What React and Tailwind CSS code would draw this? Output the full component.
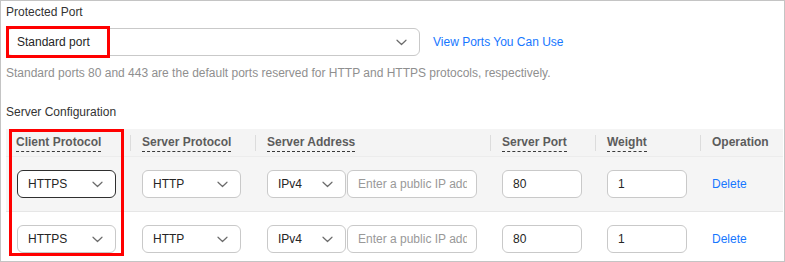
import React from "react";

function Chevron() {
  return (
    <svg width="11" height="7" viewBox="0 0 11 7" fill="none" className="shrink-0">
      <path d="M1 1.2l4.5 4.3 4.5-4.3" stroke="#6b6b6b" strokeWidth="1.2" strokeLinecap="round" strokeLinejoin="round" />
    </svg>
  );
}

function Select({ value, width, dark }) {
  return (
    <div
      className={`h-[28px] ${width} shrink-0 rounded-[6px] border ${dark ? "border-[#2f2f2f]" : "border-[#c9c9c9]"} bg-white flex items-center justify-between pl-[10px] pr-[12px] text-[12px] text-[#252525]`}
    >
      <span>{value}</span>
      <Chevron />
    </div>
  );
}

function Input({ value, placeholder, width }) {
  return (
    <div
      className={`h-[28px] ${width} shrink-0 rounded-[6px] border border-[#c9c9c9] bg-white flex items-center pl-[10px] pr-[9px] text-[12px]`}
    >
      {value ? (
        <span className="text-[#252525]">{value}</span>
      ) : (
        <span className="block min-w-0 flex-1 overflow-hidden whitespace-nowrap text-[#999999]">{placeholder}</span>
      )}
    </div>
  );
}

function HeadCell({ label, underline, sep, first }) {
  return (
    <div className={`h-full flex items-center ${first ? "pl-[10px]" : ""}`}>
      {sep && <span className="w-px h-[16px] bg-[#dcdcdc] mr-[11px]" />}
      <span
        className={`font-bold text-[12px] text-[#5c5c5c] leading-4 pb-px ${underline ? "border-b border-dashed border-[#3a3a3a]" : ""}`}
      >
        {label}
      </span>
    </div>
  );
}

function Row({ hover, darkFirst }) {
  return (
    <div
      className={`grid grid-cols-[124px_125px_235px_105px_105px_1fr] h-[55px] items-center border-b border-[#e6e6e6] ${hover ? "bg-[#f5f5f5]" : "bg-white"}`}
    >
      <div className="pl-[11px]">
        <Select value="HTTPS" width="w-[99px]" dark={darkFirst} />
      </div>
      <div className="pl-[12px]">
        <Select value="HTTP" width="w-[99px]" />
      </div>
      <div className="pl-[12px] flex gap-px">
        <Select value="IPv4" width="w-[79px]" />
        <Input placeholder="Enter a public IP address" width="w-[130px]" />
      </div>
      <div className="pl-[12px]">
        <Input value="80" width="w-[80px]" />
      </div>
      <div className="pl-[12px]">
        <Input value="1" width="w-[80px]" />
      </div>
      <div className="pl-[12px] text-[12px] text-[#1677ff]">Delete</div>
    </div>
  );
}

export default function App() {
  return (
    <div
      className="relative w-[785px] h-[262px] border border-[#c4c4c4] bg-white overflow-hidden pl-[5px] pr-[1px] pt-[3px]"
      style={{ fontFamily: '"Liberation Sans", Arial, sans-serif' }}
    >
      <div className="text-[12px] leading-4 text-[#333333]">Protected Port</div>

      <div className="mt-[8px] flex items-center">
        <div className="h-[28px] w-[414px] rounded-[6px] border border-[#c9c9c9] bg-white flex items-center justify-between pl-[10px] pr-[12px] text-[12px] text-[#252525]">
          <span>Standard port</span>
          <Chevron />
        </div>
        <span className="ml-[13px] text-[12px] text-[#1677ff]">View Ports You Can Use</span>
      </div>

      <div className="mt-[9px] text-[12px] leading-4 text-[#8f8f8f]">
        Standard ports 80 and 443 are the default ports reserved for HTTP and HTTPS protocols, respectively.
      </div>

      <div className="mt-[23px] text-[12px] leading-4 text-[#333333]">Server Configuration</div>

      <div className="mt-[9px]">
        <div className="grid grid-cols-[124px_125px_235px_105px_105px_1fr] h-[28px] bg-[#f4f4f4] border-b border-[#ececec]">
          <HeadCell label="Client Protocol" underline first />
          <HeadCell label="Server Protocol" underline sep />
          <HeadCell label="Server Address" underline sep />
          <HeadCell label="Server Port" underline sep />
          <HeadCell label="Weight" underline sep />
          <HeadCell label="Operation" sep />
        </div>
        <Row hover darkFirst />
        <Row />
      </div>

      {/* annotation boxes */}
      <div className="absolute left-[5px] top-[25px] w-[104px] h-[32px] border-[3px] border-[#ff0000] pointer-events-none" />
      <div className="absolute left-[8px] top-[128px] w-[115px] h-[127px] border-[3px] border-[#ff0000] pointer-events-none" />
    </div>
  );
}
